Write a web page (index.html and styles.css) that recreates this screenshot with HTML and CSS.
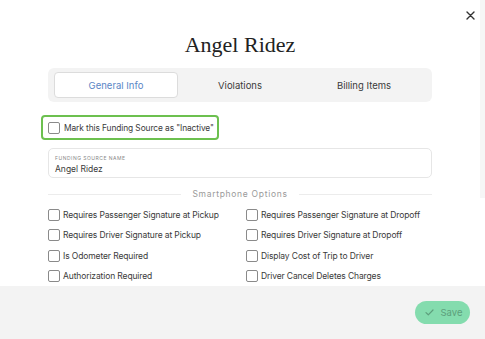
FILE: index.html
```html
<!DOCTYPE html>
<html>
<head>
<meta charset="utf-8">
<link rel="stylesheet" href="styles.css">
</head>
<body>
<div class="modal">
  <button class="close" aria-label="Close">
    <svg width="9" height="9" viewBox="0 0 9 9"><path d="M1 1L8 8M8 1L1 8" stroke="#333" stroke-width="1.4" stroke-linecap="round"/></svg>
  </button>
  <div class="scroll-thumb"></div>
  <div class="content">
    <h1 class="title">Angel Ridez</h1>
    <div class="tabs">
      <div class="tab active">General Info</div>
      <div class="tab">Violations</div>
      <div class="tab">Billing Items</div>
    </div>
    <label class="inactive-box">
      <span class="cb"></span>
      <span>Mark this Funding Source as "Inactive"</span>
    </label>
    <div class="field">
      <div class="field-label">FUNDING SOURCE NAME</div>
      <div class="field-value">Angel Ridez</div>
    </div>
    <div class="divider"><span>Smartphone Options</span></div>
    <div class="options">
      <label class="opt"><span class="cb"></span>Requires Passenger Signature at Pickup</label>
      <label class="opt"><span class="cb"></span>Requires Passenger Signature at Dropoff</label>
      <label class="opt"><span class="cb"></span>Requires Driver Signature at Pickup</label>
      <label class="opt"><span class="cb"></span>Requires Driver Signature at Dropoff</label>
      <label class="opt"><span class="cb"></span>Is Odometer Required</label>
      <label class="opt"><span class="cb"></span>Display Cost of Trip to Driver</label>
      <label class="opt"><span class="cb"></span>Authorization Required</label>
      <label class="opt"><span class="cb"></span>Driver Cancel Deletes Charges</label>
    </div>
  </div>
  <div class="footer">
    <button class="save">
      <svg width="9" height="7" viewBox="0 0 9 7"><path d="M1 3.6L3.3 5.8L8 1" fill="none" stroke="#5d9f7c" stroke-width="1.2" stroke-linecap="round" stroke-linejoin="round"/></svg>
      <span>Save</span>
    </button>
  </div>
</div>
</body>
</html>
```
FILE: styles.css
```css
* { box-sizing: border-box; }
html, body { margin: 0; padding: 0; }
body {
  width: 485px;
  height: 339px;
  overflow: hidden;
  background: #fff;
  font-family: Inter, "Noto Sans", sans-serif;
  color: #333;
}
.modal {
  position: relative;
  width: 485px;
  height: 339px;
  display: flex;
  flex-direction: column;
}
.close {
  position: absolute;
  top: 10px;
  right: 9px;
  width: 11px;
  height: 11px;
  padding: 0;
  border: 0;
  background: none;
  display: flex;
  align-items: center;
  justify-content: center;
}
.scroll-thumb {
  position: absolute;
  top: 0;
  right: 0;
  width: 5px;
  height: 198px;
  background: #f6f6f6;
}
.content {
  height: 286px;
  padding: 0 53px 0 48px;
  overflow: hidden;
}
.title {
  margin: 31px 0 0;
  height: 28px;
  line-height: 28px;
  text-align: center;
  font-family: "Liberation Serif", serif;
  font-weight: 400;
  font-size: 22px;
  color: #222;
}
.tabs {
  margin-top: 9px;
  height: 34px;
  background: #f3f3f3;
  border-radius: 6px;
  padding: 4px 6px;
  display: grid;
  grid-template-columns: 1fr 1fr 1fr;
}
.tab {
  display: flex;
  align-items: center;
  justify-content: center;
  font-size: 9.5px;
  color: #3a3a3a;
  border-radius: 4px;
}
.tab.active {
  background: #fff;
  border: 1px solid #dcdcdc;
  color: #5a86c6;
}
.inactive-box {
  margin: 13px 0 0 -7px;
  width: 178px;
  height: 25px;
  border: 2px solid #6cc04f;
  border-radius: 4px;
  display: flex;
  align-items: center;
  gap: 4px;
  padding-left: 5px;
  font-size: 8.4px;
  letter-spacing: -0.1px;
  white-space: nowrap;
  color: #3a3a3a;
}
.cb {
  display: inline-block;
  width: 12px;
  height: 12px;
  border: 1px solid #8a8a8a;
  border-radius: 2px;
  background: #fff;
  flex: none;
}
.field {
  margin-top: 8px;
  height: 30px;
  border: 1px solid #e6e6e6;
  border-radius: 5px;
  padding: 6px 0 0 6px;
}
.field-label {
  font-size: 5px;
  letter-spacing: 0.5px;
  color: #888;
  line-height: 7px;
}
.field-value {
  font-size: 8.5px;
  line-height: 12px;
  color: #3a3a3a;
  margin-top: 1px;
}
.divider {
  margin-top: 9px;
  display: flex;
  align-items: center;
  gap: 11px;
  font-size: 8.5px;
  letter-spacing: 0.7px;
  color: #9a9a9a;
  height: 14px;
}
.divider::before, .divider::after {
  content: "";
  flex: 1;
  height: 1px;
  background: #ececec;
}
.options {
  margin-top: 7px;
  display: grid;
  grid-template-columns: 198px 1fr;
  row-gap: 7px;
}
.opt {
  display: flex;
  align-items: center;
  gap: 3px;
  height: 13.5px;
  font-size: 8.5px;
  letter-spacing: -0.12px;
  white-space: nowrap;
  color: #3a3a3a;
}
.footer {
  flex: 1;
  background: #f3f3f3;
  display: flex;
  align-items: center;
  justify-content: flex-end;
  padding: 0 15px 0 0;
}
.save {
  margin-top: -1px;
  width: 55px;
  height: 23px;
  border: 0;
  border-radius: 12px;
  background: #84dcae;
  display: flex;
  align-items: center;
  justify-content: center;
  gap: 7px;
  font-family: Inter, "Noto Sans", sans-serif;
  font-size: 9.5px;
  color: #5d9f7c;
  padding: 0 0 0 2px;
}
```
